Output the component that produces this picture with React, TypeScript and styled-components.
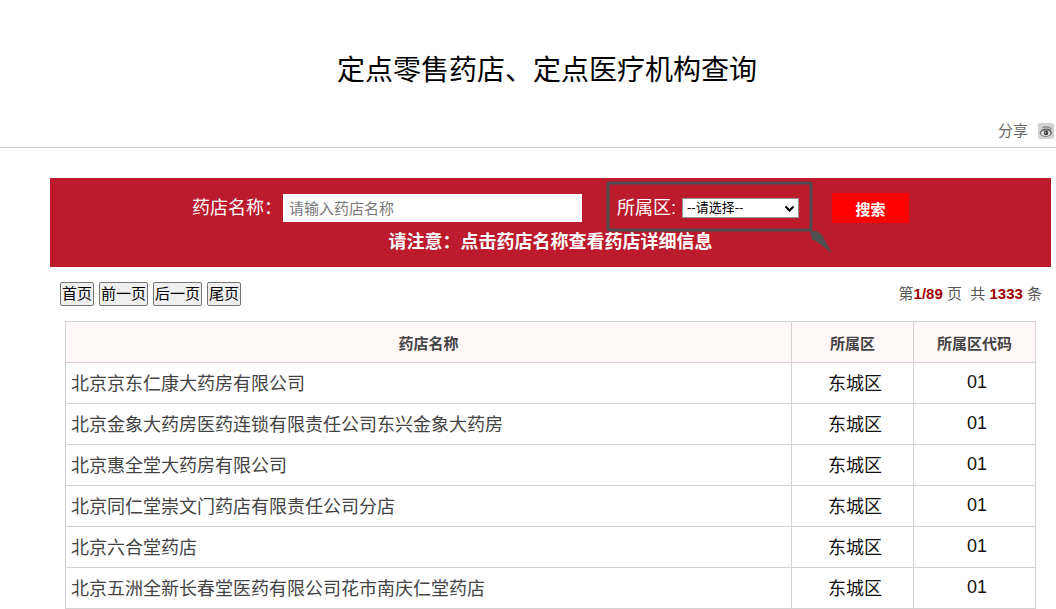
import React from 'react';
import styled, { createGlobalStyle } from 'styled-components';

const GlobalStyle = createGlobalStyle`
  *, *::before, *::after { box-sizing: border-box; }
  body {
    margin: 0;
    background: #fff;
    color: #111;
    font-family: "Liberation Sans", "Noto Sans CJK SC", sans-serif;
    overflow-x: hidden;
  }
  button, input, select { font-family: inherit; }
`;

const Header = styled.header`
  border-bottom: 1px solid #cfcfcf;
`;

const Title = styled.h1`
  margin: 0;
  padding: 49px 0 0 38px;
  font-size: 28px;
  line-height: 44px;
  font-weight: 400;
  text-align: center;
  color: #000;
`;

const ShareBar = styled.div`
  display: flex;
  align-items: center;
  justify-content: flex-end;
  gap: 10px;
  padding: 27px 2px 5px 0;
  font-size: 15px;
  line-height: 22px;
  color: #666;
`;

const ShareLink = styled.a`
  display: flex;
  color: inherit;
`;

const Main = styled.main`
  margin: 30px 5px 0 50px;
`;

const SearchPanel = styled.form`
  height: 89px;
  padding-top: 12px;
  background: #bb1b2c;
  color: #fff;
  font-size: 18px;
`;

const SearchRow = styled.div`
  display: flex;
  align-items: center;
  justify-content: center;
  height: 36px;
`;

const Label = styled.label`
  line-height: 28px;
  white-space: nowrap;
`;

const NameInput = styled.input`
  width: 299px;
  height: 28px;
  margin: 0 35px 0 1px;
  padding: 0 6px;
  border: 0;
  background: #fff;
  font-size: 15px;
  &::placeholder { color: #777; opacity: 1; }
`;

const AreaField = styled.div`
  position: relative;
  display: flex;
  align-items: center;
  gap: 6px;
`;

const AreaSelectBox = styled.div`
  position: relative;
  display: flex;
`;

const AreaSelect = styled.select`
  appearance: none;
  width: 117px;
  height: 20px;
  padding: 0 20px 0 4px;
  border: 1px solid #999;
  border-radius: 0;
  background: #fff;
  color: #000;
  font-size: 13px;
  line-height: 18px;
`;

const Chevron = styled.svg`
  position: absolute;
  top: 7px;
  right: 4px;
  pointer-events: none;
`;

const Marker = styled.svg`
  position: absolute;
  top: -15px;
  left: -12px;
  pointer-events: none;
`;

const SearchButton = styled.button`
  width: 77px;
  height: 30px;
  margin-left: 33px;
  padding: 0;
  border: 0;
  background: #f00;
  color: #fff;
  font-size: 15px;
  font-weight: 700;
`;

const Notice = styled.p`
  margin: 0;
  padding-top: 2px;
  font-weight: 700;
  line-height: 28px;
  text-align: center;
`;

const PagerBar = styled.div`
  display: flex;
  align-items: center;
  justify-content: space-between;
  height: 54px;
  padding: 0 9px 0 10px;
  font-size: 15px;
  line-height: 20px;
  color: #555;
`;

const Pager = styled.nav`
  display: flex;
  gap: 5px;
`;

const PageButton = styled.button`
  height: 24px;
  padding: 0 1px;
  border: 1px solid #767676;
  border-radius: 2px;
  background: #efefef;
  color: #000;
  font-size: 15px;
  line-height: 20px;
`;

const Count = styled.b`
  color: #a00000;
`;

const TableArea = styled.div`
  padding: 0 15px;
`;

const Table = styled.table`
  width: 100%;
  table-layout: fixed;
  border-collapse: collapse;
`;

const HeadCell = styled.th<{ $width?: number }>`
  width: ${(p) => (p.$width ? `${p.$width}px` : 'auto')};
  height: 41px;
  padding: 0;
  border: 1px solid #d3d0d0;
  background: #fff7f8;
  color: #444;
  font-size: 15px;
`;

const Cell = styled.td`
  height: 41px;
  padding: 1px 0 0 5px;
  border: 1px solid #d3d3d3;
  color: #111;
  font-size: 18px;
  line-height: 28px;
  text-align: center;
`;

const NameCell = styled(Cell)`
  text-align: left;
`;

const CodeCell = styled(Cell)`
  padding-top: 0;
  padding-bottom: 2px;
`;

const PharmacyLink = styled.a`
  color: #444;
  text-decoration: none;
`;

const pharmacies = [
  '北京京东仁康大药房有限公司',
  '北京金象大药房医药连锁有限责任公司东兴金象大药房',
  '北京惠全堂大药房有限公司',
  '北京同仁堂崇文门药店有限责任公司分店',
  '北京六合堂药店',
  '北京五洲全新长春堂医药有限公司花市南庆仁堂药店',
];

function WeiboIcon() {
  return (
    <svg width="16" height="16" viewBox="0 0 16 16" aria-hidden="true">
      <rect width="16" height="16" rx="2" fill="#d2d2d2" />
      <path d="M1.500 10C2.500 7 5 5.600 8 5.600c3.400 0 5.700 1.700 6.100 4.200-.6 2.500-3.200 4-6.200 4-3.200 0-5.900-1.400-6.400-3.800z" fill="#6a6a6a" />
      <path d="M4.500 4.800c3-1.600 7-1 9 1.800" fill="none" stroke="#858585" strokeWidth="1.400" />
      <ellipse cx="7.700" cy="10.200" rx="4.600" ry="2.700" fill="#e4e4e4" />
      <circle cx="8" cy="9.900" r="2.300" fill="#444" />
      <circle cx="7.300" cy="9.500" r="0.700" fill="#ccc" />
    </svg>
  );
}

export default function App() {
  return (
    <>
      <GlobalStyle />
      <Header>
        <Title>定点零售药店、定点医疗机构查询</Title>
        <ShareBar>
          <span>分享</span>
          <ShareLink href="#weibo" aria-label="微博">
            <WeiboIcon />
          </ShareLink>
        </ShareBar>
      </Header>
      <Main>
        <SearchPanel onSubmit={(e) => e.preventDefault()}>
          <SearchRow>
            <Label htmlFor="name">药店名称：</Label>
            <NameInput id="name" type="text" placeholder="请输入药店名称" />
            <AreaField>
              <Label htmlFor="area">所属区:</Label>
              <AreaSelectBox>
                <AreaSelect id="area">
                  <option>--请选择--</option>
                </AreaSelect>
                <Chevron width="11" height="8" viewBox="0 0 11 8" aria-hidden="true">
                  <path d="M1.500 1.500l4 4 4-4" fill="none" stroke="#000" strokeWidth="2" />
                </Chevron>
              </AreaSelectBox>
              <Marker width="230" height="76" viewBox="0 0 230 76" aria-hidden="true">
                <rect x="3" y="4" width="203" height="47" rx="1" fill="none" stroke="#4f4c4f" strokeWidth="3" />
                <path d="M205 52l7 0 5 4 10 18-15-11-5-3z" fill="#4f5050" />
              </Marker>
            </AreaField>
            <SearchButton type="submit">搜索</SearchButton>
          </SearchRow>
          <Notice>请注意：点击药店名称查看药店详细信息</Notice>
        </SearchPanel>
        <PagerBar>
          <Pager aria-label="分页">
            <PageButton type="button">首页</PageButton>
            <PageButton type="button">前一页</PageButton>
            <PageButton type="button">后一页</PageButton>
            <PageButton type="button">尾页</PageButton>
          </Pager>
          <span>
            第<Count>1/89</Count> 页&nbsp; 共 <Count>1333</Count> 条
          </span>
        </PagerBar>
        <TableArea>
          <Table>
            <thead>
              <tr>
                <HeadCell>药店名称</HeadCell>
                <HeadCell $width={122}>所属区</HeadCell>
                <HeadCell $width={122}>所属区代码</HeadCell>
              </tr>
            </thead>
            <tbody>
              {pharmacies.map((name) => (
                <tr key={name}>
                  <NameCell>
                    <PharmacyLink href="#detail">{name}</PharmacyLink>
                  </NameCell>
                  <Cell>东城区</Cell>
                  <CodeCell>01</CodeCell>
                </tr>
              ))}
            </tbody>
          </Table>
        </TableArea>
      </Main>
    </>
  );
}
